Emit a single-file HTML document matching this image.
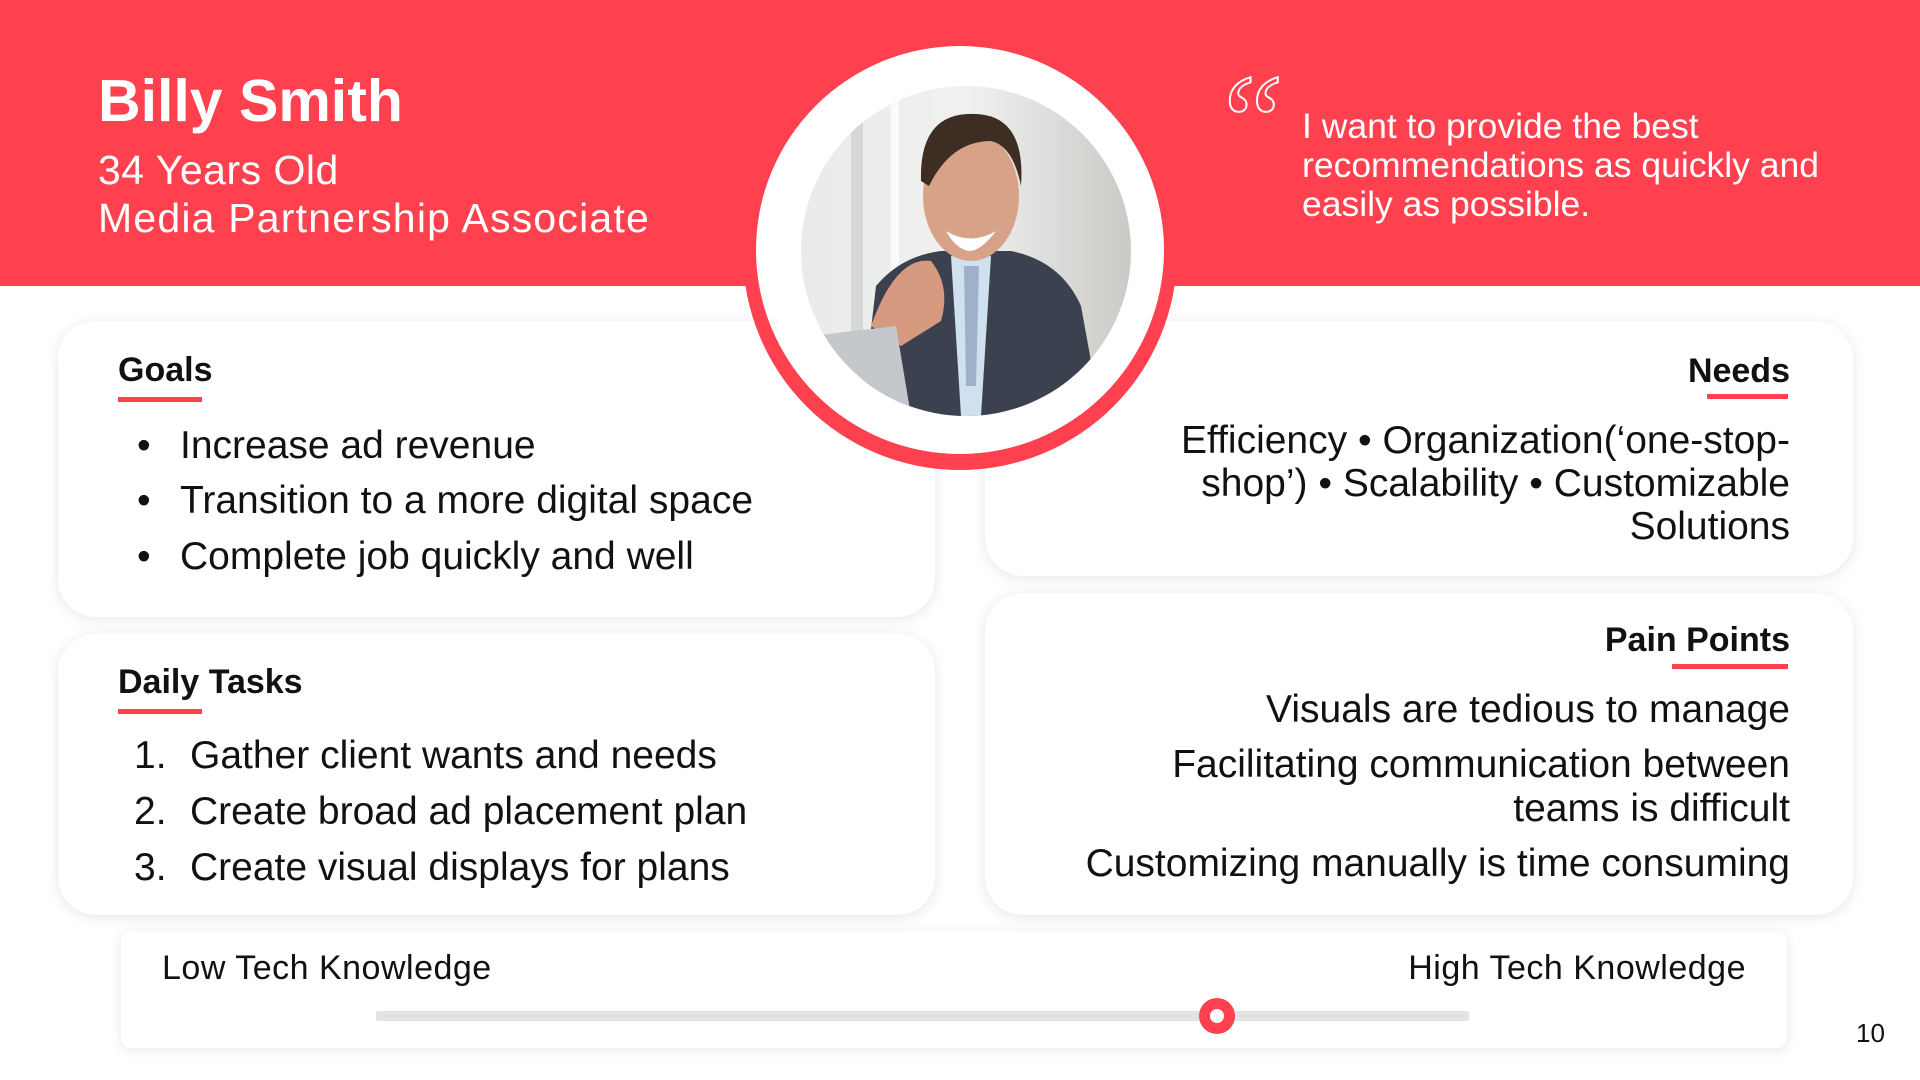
<!DOCTYPE html>
<html><head><meta charset="utf-8"><style>
*{margin:0;padding:0;box-sizing:border-box}
body{width:1920px;height:1080px;background:#fff;position:relative;overflow:hidden;font-family:"Liberation Sans",sans-serif;color:#111}
.band{position:absolute;left:0;top:0;width:1920px;height:286px;background:#ff404e}
.abs{position:absolute;white-space:nowrap}
.card{position:absolute;background:#fff;border-radius:38px;box-shadow:0 2px 14px rgba(0,0,0,0.10)}
h2{position:absolute;font-size:34px;font-weight:bold;white-space:nowrap;line-height:40px}
.ul{position:absolute;height:5px;background:#ff404e}
.t{position:absolute;font-size:39px;white-space:nowrap;line-height:44px}
.r{text-align:right}
</style></head><body>
<div class="band"></div>
<div class="abs" style="left:98px;top:65px;font-size:59px;font-weight:bold;color:#fff;line-height:72px">Billy Smith</div>
<div class="abs" style="left:98px;top:146px;font-size:41px;color:#fff;line-height:48px;letter-spacing:0.5px">34 Years Old</div>
<div class="abs" style="left:98px;top:194px;font-size:41px;color:#fff;line-height:48px;letter-spacing:1.2px">Media Partnership Associate</div>

<!-- quote -->
<div class="abs" style="left:1210px;top:58px;font-size:135px;color:transparent;-webkit-text-stroke:2px #fff;font-family:'Liberation Serif',serif;line-height:130px;font-style:italic">“</div>
<div class="abs" style="left:1302px;top:107px;font-size:35.5px;color:#fff;line-height:39px">I want to provide the best<br>recommendations as quickly and<br>easily as possible.</div>

<!-- Goals -->
<div class="card" style="left:58px;top:321px;width:877px;height:296px"></div>
<h2 style="left:118px;top:350px">Goals</h2>
<div class="ul" style="left:118px;top:397px;width:84px"></div>
<div class="t" style="left:137px;top:424px">•</div><div class="t" style="left:180px;top:424px">Increase ad revenue</div>
<div class="t" style="left:137px;top:479px">•</div><div class="t" style="left:180px;top:479px">Transition to a more digital space</div>
<div class="t" style="left:137px;top:535px">•</div><div class="t" style="left:180px;top:535px">Complete job quickly and well</div>

<!-- Daily -->
<div class="card" style="left:58px;top:634px;width:877px;height:281px"></div>
<h2 style="left:118px;top:662px">Daily Tasks</h2>
<div class="ul" style="left:118px;top:709px;width:84px"></div>
<div class="t" style="left:134px;top:734px">1.</div><div class="t" style="left:190px;top:734px">Gather client wants and needs</div>
<div class="t" style="left:134px;top:790px">2.</div><div class="t" style="left:190px;top:790px">Create broad ad placement plan</div>
<div class="t" style="left:134px;top:846px">3.</div><div class="t" style="left:190px;top:846px">Create visual displays for plans</div>

<!-- Needs -->
<div class="card" style="left:985px;top:321px;width:868px;height:255px"></div>
<h2 style="right:130px;top:351px">Needs</h2>
<div class="ul" style="left:1707px;top:394px;width:81px"></div>
<div class="t r" style="right:130px;top:419px;line-height:43px">Efficiency • Organization(‘one-stop-<br>shop’) • Scalability • Customizable<br>Solutions</div>

<!-- Pain -->
<div class="card" style="left:985px;top:593px;width:868px;height:322px"></div>
<h2 style="right:130px;top:620px">Pain Points</h2>
<div class="ul" style="left:1672px;top:664px;width:116px"></div>
<div class="t r" style="right:130px;top:688px">Visuals are tedious to manage</div>
<div class="t r" style="right:130px;top:743px;line-height:44px">Facilitating communication between<br>teams is difficult</div>
<div class="t r" style="right:130px;top:842px">Customizing manually is time consuming</div>

<!-- circles -->
<div style="position:absolute;left:743px;top:36px;width:434px;height:434px;border-radius:50%;background:#ff404e"></div>
<div style="position:absolute;left:756px;top:46px;width:408px;height:408px;border-radius:50%;background:#fff"></div>
<svg style="position:absolute;left:801px;top:86px" width="330" height="330" viewBox="0 0 330 330">
<defs><clipPath id="c"><circle cx="165" cy="165" r="165"/></clipPath>
<linearGradient id="bg" x1="0" x2="1"><stop offset="0" stop-color="#e9ebea"/><stop offset="0.5" stop-color="#f1f1ef"/><stop offset="1" stop-color="#c9cbc7"/></linearGradient></defs>
<g clip-path="url(#c)">
<rect width="330" height="330" fill="url(#bg)"/>
<rect x="50" y="0" width="12" height="330" fill="#d5d8d6"/>
<rect x="90" y="0" width="8" height="330" fill="#fafafa"/>
<path d="M60 330 L75 200 Q100 170 140 165 L210 165 Q260 175 280 220 L300 330Z" fill="#3c4150"/>
<path d="M150 170 L190 170 L180 330 L160 330Z" fill="#cfe0ee"/>
<path d="M163 180 L178 180 L175 300 L165 300Z" fill="#9fb1c8"/>
<ellipse cx="170" cy="110" rx="48" ry="65" fill="#d7a288"/>
<path d="M120 95 Q118 25 175 28 Q225 30 220 100 Q212 60 190 55 Q150 55 128 100Z" fill="#3d2d22"/>
<path d="M145 145 Q170 160 195 145 Q180 165 168 165 Q155 163 145 145Z" fill="#fff"/>
<path d="M70 240 Q95 170 130 175 Q150 200 140 235 L100 260Z" fill="#d59a80"/>
<path d="M10 250 L95 240 L110 330 L10 330Z" fill="#c4c8cc"/>
</g></svg>

<!-- slider -->
<div style="position:absolute;left:121px;top:931px;width:1666px;height:117px;background:#fff;border-radius:10px;box-shadow:0 2px 12px rgba(0,0,0,0.10)"></div>
<div class="abs" style="left:162px;top:949px;font-size:34px;line-height:38px;letter-spacing:0.5px">Low Tech Knowledge</div>
<div class="abs" style="right:174px;top:949px;font-size:34px;line-height:38px;letter-spacing:0.5px">High Tech Knowledge</div>
<div style="position:absolute;left:376px;top:1011px;width:1093px;height:10px;background:#e3e3e3;border-radius:2px"></div>
<div style="position:absolute;left:1199px;top:998px;width:36px;height:36px;border-radius:50%;background:#ff404e"></div>
<div style="position:absolute;left:1210px;top:1009px;width:14px;height:14px;border-radius:50%;background:#fff"></div>
<div class="abs" style="left:1856px;top:1018px;font-size:26px;line-height:30px">10</div>
</body></html>
